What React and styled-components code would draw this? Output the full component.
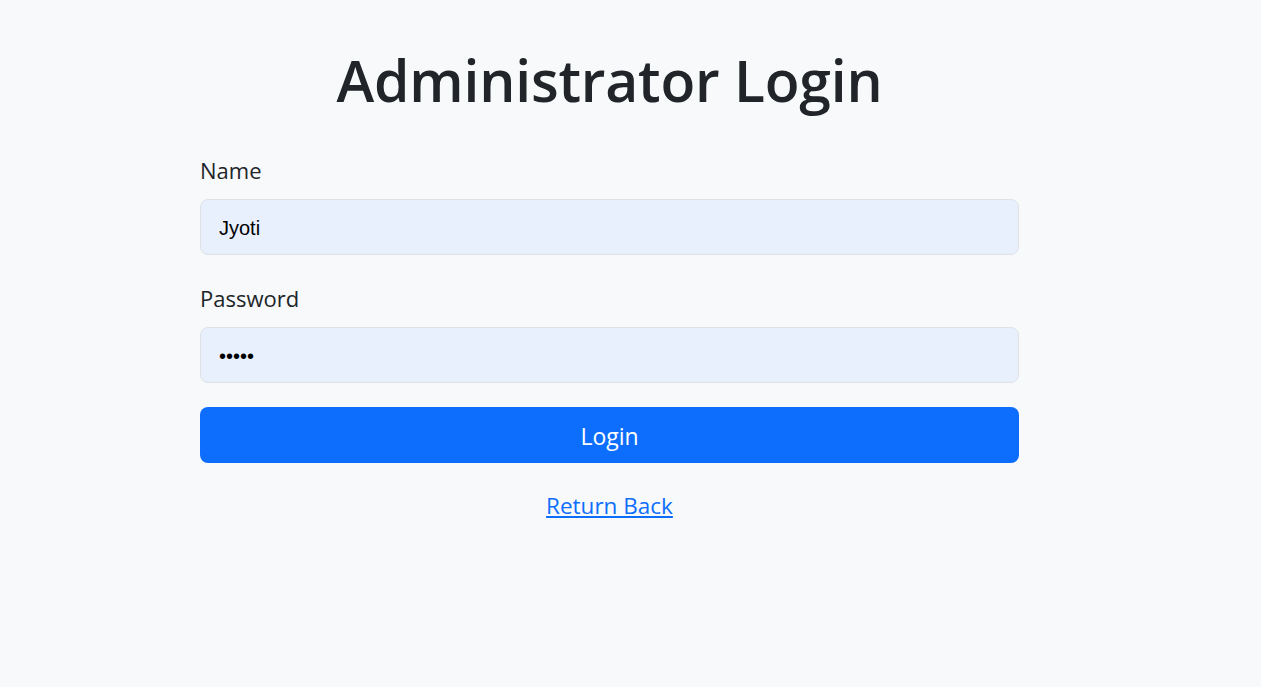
import React from "react";
import styled, { createGlobalStyle } from "styled-components";

const Global = createGlobalStyle`
  html, body { margin: 0; padding: 0; background: #f8f9fa; }
  body { font-family: "Open Sans", "Noto Sans", sans-serif; color: #212529; }
  * { box-sizing: border-box; }
`;

const Page = styled.main`
  min-height: 687px;
  background: #f8f9fa;
  padding: 44px 0 0 200px;
`;

const Panel = styled.div`
  width: 819px;
  display: flex;
  flex-direction: column;
`;

const Title = styled.h1`
  margin: 0 0 35px;
  text-align: center;
  font-size: 57px;
  font-weight: 600;
  line-height: 72px;
  color: #212529;
  letter-spacing: -0.2px;
`;

const Form = styled.form`
  display: flex;
  flex-direction: column;
`;

const Field = styled.div`
  display: flex;
  flex-direction: column;
  margin-bottom: 24px;
`;

const Label = styled.label`
  font-size: 22px;
  line-height: 38px;
  margin-bottom: 10px;
  color: #212529;
`;

const Input = styled.input`
  height: 56px;
  width: 100%;
  padding: 3px 18px 0;
  border: 1px solid #dee2e6;
  border-radius: 8px;
  background: #e8f0fe;
  color: #000;
  font-family: "Liberation Sans", Arial, sans-serif;
  font-size: 20px;
  outline: none;
`;

const Button = styled.button`
  height: 56px;
  width: 100%;
  border: none;
  border-radius: 8px;
  background: #0d6efd;
  color: #fff;
  font-family: "Open Sans", "Noto Sans", sans-serif;
  font-size: 23px;
  padding-top: 2px;
  cursor: pointer;
`;

const BackLink = styled.a`
  align-self: center;
  margin-top: 27px;
  font-size: 22.5px;
  line-height: 32px;
  color: #0d6efd;
  text-decoration: underline;
`;

export default function App() {
  return (
    <>
      <Global />
      <Page>
        <Panel>
          <Title>Administrator Login</Title>
          <Form onSubmit={(e) => e.preventDefault()}>
            <Field>
              <Label htmlFor="name">Name</Label>
              <Input id="name" type="text" defaultValue="Jyoti" />
            </Field>
            <Field>
              <Label htmlFor="password">Password</Label>
              <Input id="password" type="password" defaultValue="12345" />
            </Field>
            <Button type="submit">Login</Button>
          </Form>
          <BackLink href="#">Return Back</BackLink>
        </Panel>
      </Page>
    </>
  );
}
